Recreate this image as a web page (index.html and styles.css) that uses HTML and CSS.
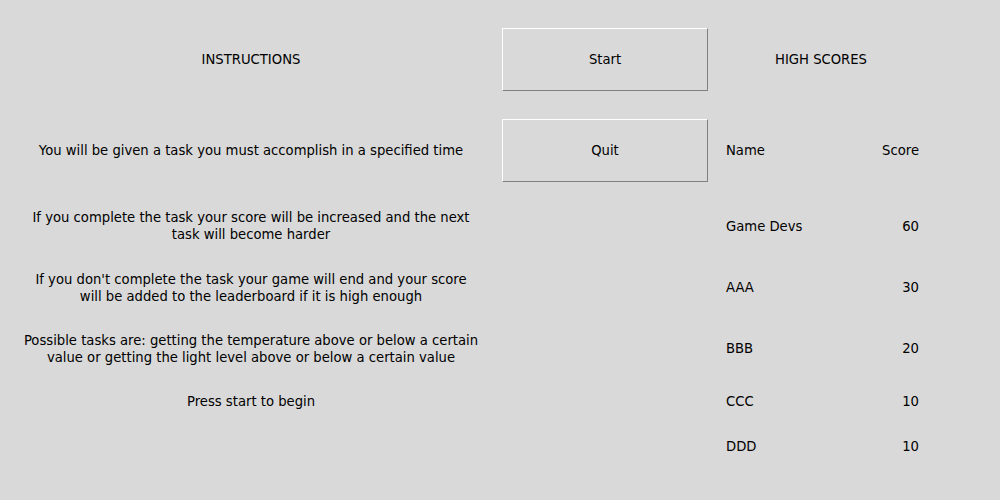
FILE: index.html
```html
<!DOCTYPE html>
<html>
<head>
<meta charset="utf-8">
<link rel="stylesheet" href="styles.css">
</head>
<body>
<div class="app">
  <div class="cell c1 r1 title">INSTRUCTIONS</div>
  <div class="cell c2 r1"><button class="btn btn-start">Start</button></div>
  <div class="cell c3 r1 title">HIGH SCORES</div>

  <div class="cell c1 r2">You will be given a task you must accomplish in a specified time</div>
  <div class="cell c2 r2"><button class="btn btn-quit">Quit</button></div>
  <div class="cell c3 r2 row"><span>Name</span><span>Score</span></div>

  <div class="cell c1 r3">If you complete the task your score will be increased and the next<br>task will become harder</div>
  <div class="cell c3 r3 row"><span>Game Devs</span><span>60</span></div>

  <div class="cell c1 r4">If you don't complete the task your game will end and your score<br>will be added to the leaderboard if it is high enough</div>
  <div class="cell c3 r4 row"><span>AAA</span><span>30</span></div>

  <div class="cell c1 r5">Possible tasks are: getting the temperature above or below a certain<br>value or getting the light level above or below a certain value</div>
  <div class="cell c3 r5 row"><span>BBB</span><span>20</span></div>

  <div class="cell c1 r6">Press start to begin</div>
  <div class="cell c3 r6 row"><span>CCC</span><span>10</span></div>

  <div class="cell c3 r7 row"><span>DDD</span><span>10</span></div>
</div>
</body>
</html>
```

FILE: styles.css
```css
html, body {
  margin: 0;
  padding: 0;
  background: #d9d9d9;
}
body {
  width: 1000px;
  height: 500px;
  overflow: hidden;
  font-family: "DejaVu Sans", sans-serif;
  font-size: 13.2px;
  color: #000;
}
.app {
  display: grid;
  grid-template-columns: 502px 206px 226px;
  grid-template-rows: 119px 63px 88px 35px 87px 18px 72px;
}
.cell {
  display: flex;
  align-items: center;
  justify-content: center;
  text-align: center;
  line-height: 17px;
  white-space: nowrap;
}
.c1 { grid-column: 1; }
.c2 { grid-column: 2; }
.c3 { grid-column: 3; }
.r1 { grid-row: 1; }
.r2 { grid-row: 2; }
.r3 { grid-row: 3; }
.r4 { grid-row: 4; }
.r5 { grid-row: 5; }
.r6 { grid-row: 6; }
.r7 { grid-row: 7; }
.row {
  justify-content: space-between;
  padding: 0 15px 0 18px;
}
.btn {
  width: 206px;
  height: 63px;
  margin: 0;
  padding: 0;
  background: #d9d9d9;
  border-style: solid;
  border-width: 1px;
  border-color: #ffffff #808080 #808080 #ffffff;
  font: inherit;
  color: #000;
}
```
